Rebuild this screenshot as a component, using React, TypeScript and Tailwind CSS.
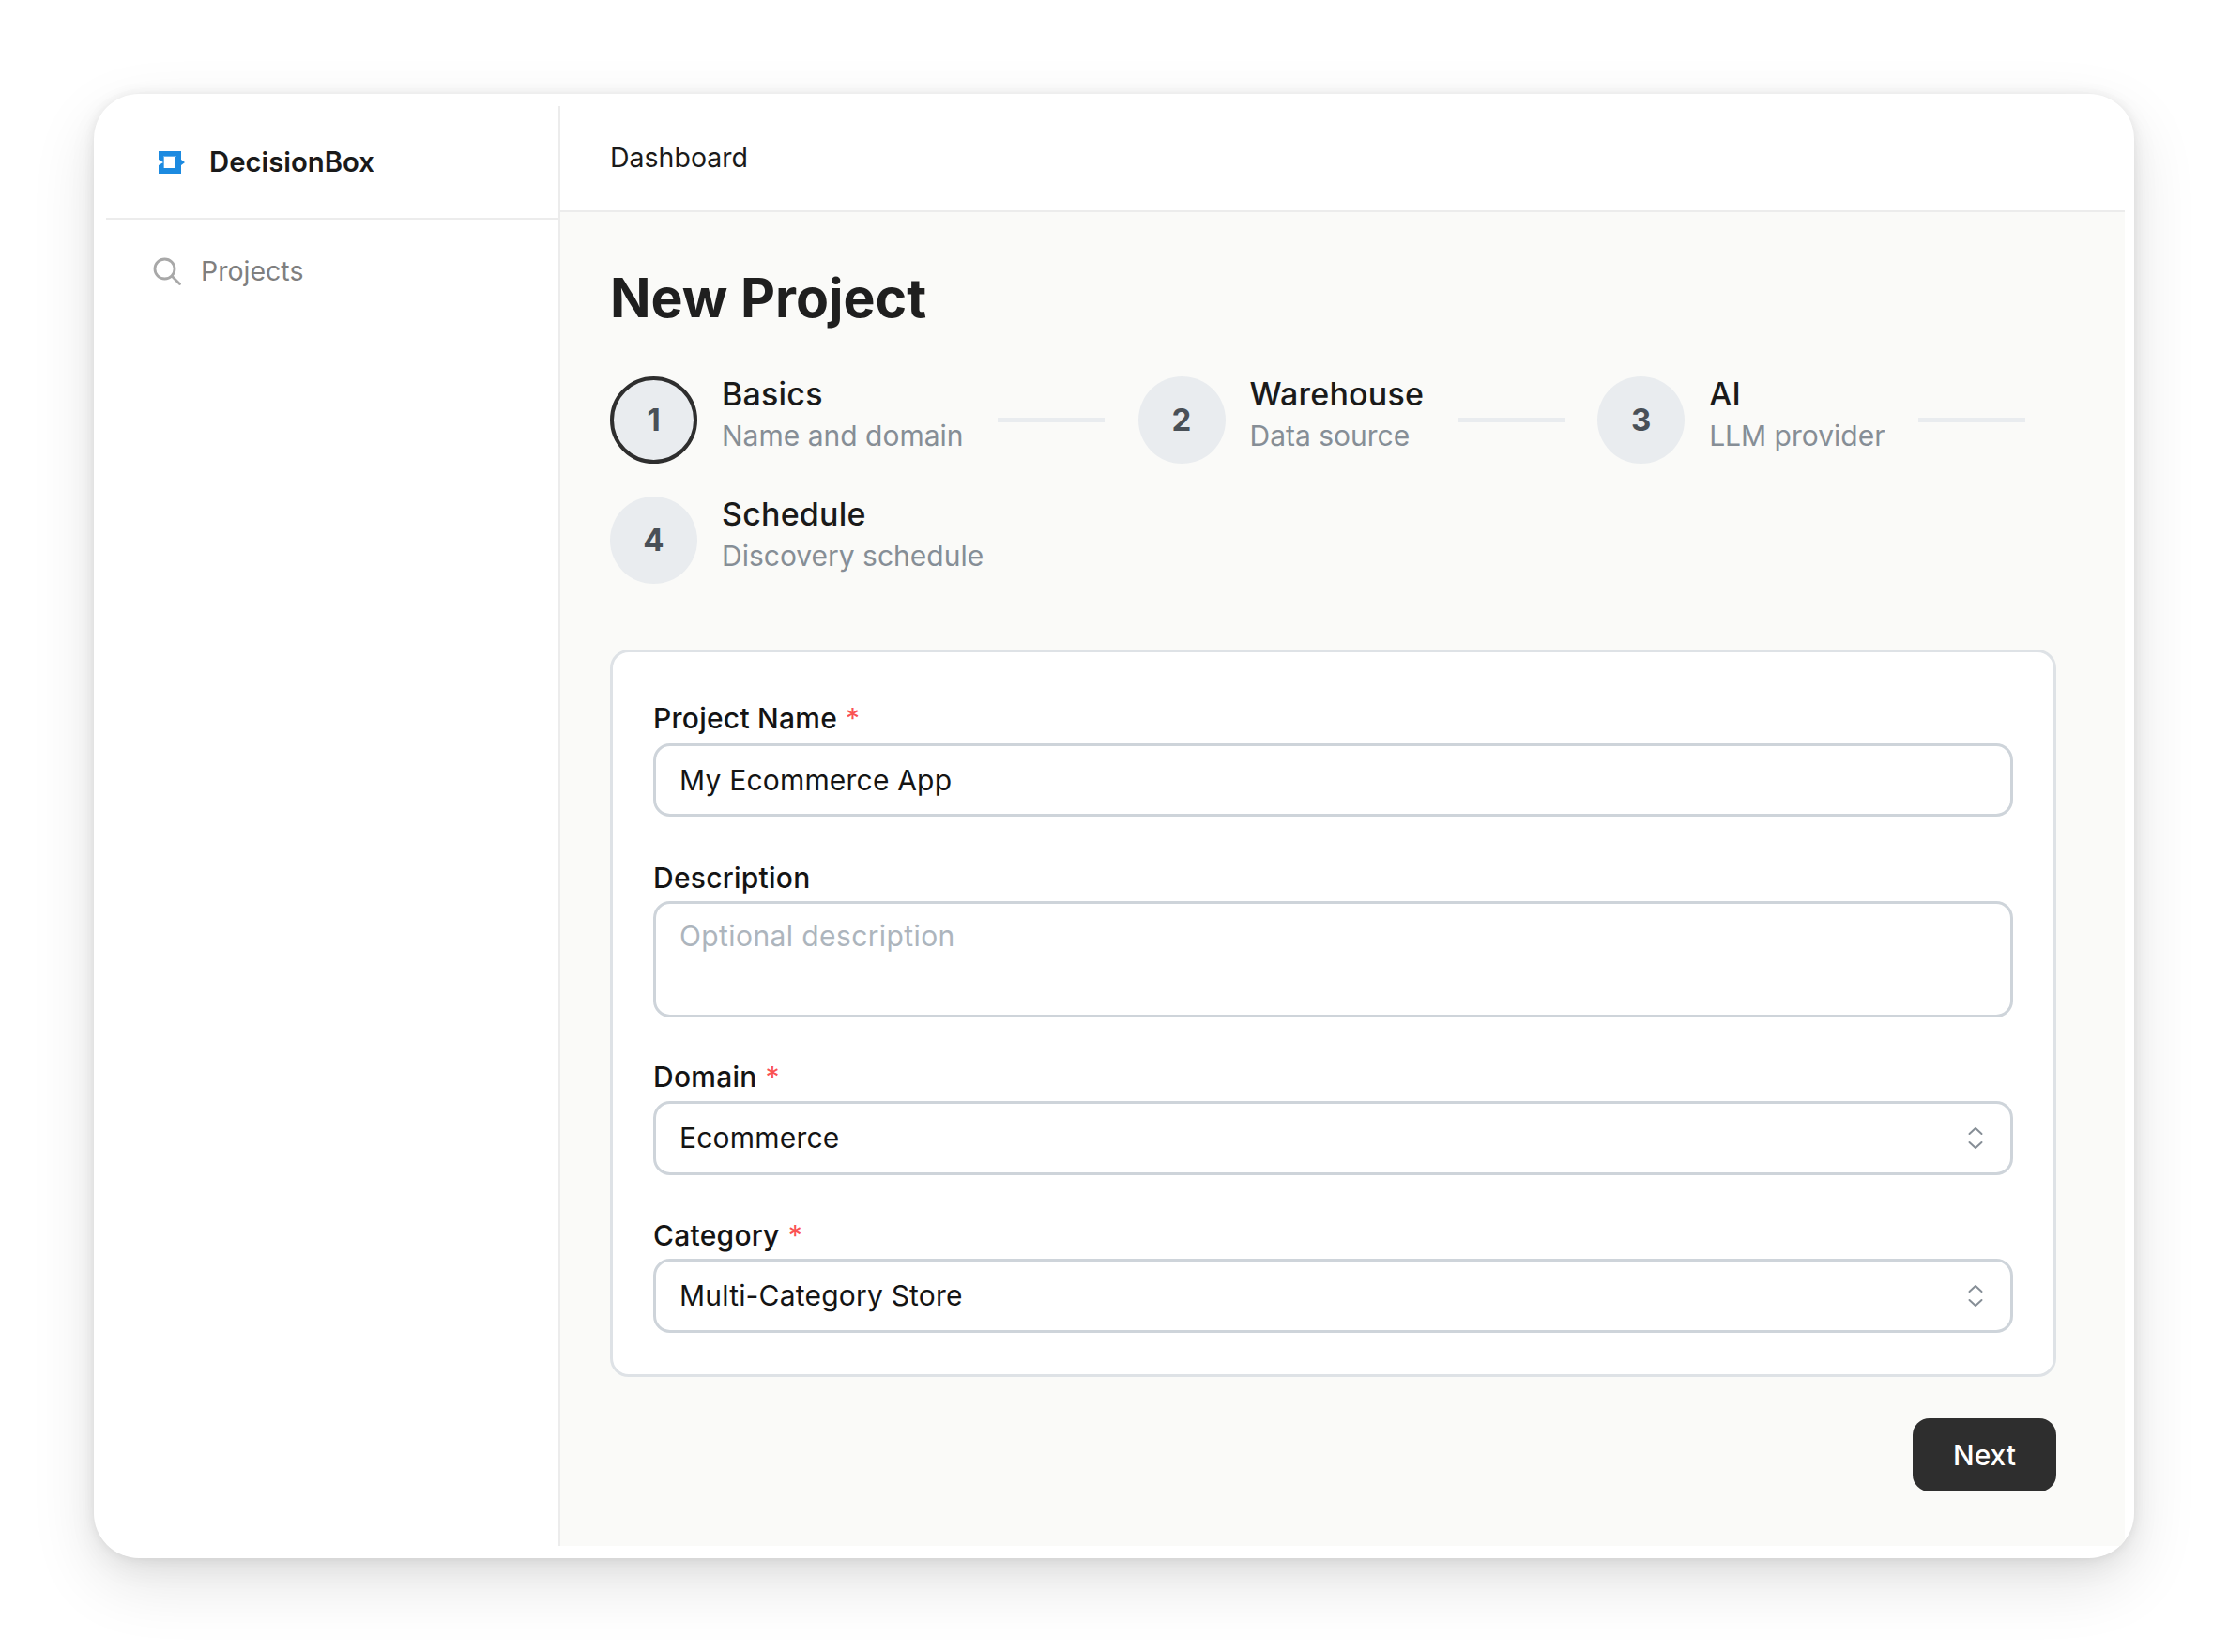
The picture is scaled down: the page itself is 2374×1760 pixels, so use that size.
import React from 'react';

const font = 'font-["Inter","Liberation_Sans",sans-serif]';

interface Step {
  n: number;
  title: string;
  desc: string;
}

const steps: Step[] = [
  { n: 1, title: 'Basics', desc: 'Name and domain' },
  { n: 2, title: 'Warehouse', desc: 'Data source' },
  { n: 3, title: 'AI', desc: 'LLM provider' },
  { n: 4, title: 'Schedule', desc: 'Discovery schedule' },
];

function Logo() {
  return (
    <svg width="28" height="24" viewBox="0 0 28 24" className="shrink-0">
      <path
        fillRule="evenodd"
        fill="#1c8ae0"
        d="M0 0H24V9L28 12L24 15V24H0V15L5 12L0 9ZM6 6V18H18V6Z"
      />
      <path fill="#a5d3f5" d="M5 5H19V6H6V18H5Z" opacity="0.55" />
    </svg>
  );
}

function SearchIcon() {
  return (
    <svg width="30" height="30" viewBox="0 0 30 30" fill="none" stroke="#a8a8a8" strokeWidth="2.8" strokeLinecap="round" className="shrink-0">
      <circle cx="12.5" cy="12.5" r="10.5" />
      <line x1="20.5" y1="20.5" x2="28.5" y2="28.5" />
    </svg>
  );
}

function Sort() {
  return (
    <svg width="16" height="25" viewBox="0 0 16 25" fill="none" stroke="#868e96" strokeWidth="2" strokeLinecap="round" strokeLinejoin="round">
      <polyline points="1.5,8 8,2 14.5,8" />
      <polyline points="1.5,17 8,23 14.5,17" />
    </svg>
  );
}

function Label({ text, required }: { text: string; required?: boolean }) {
  return (
    <div className="flex items-center h-[34px] text-[30px] leading-[34px] font-medium text-[#141414] tracking-[0.25px]">
      {text}
      {required && <span className="ml-[9px] font-normal text-[#fa5252]">*</span>}
    </div>
  );
}

function StepItem({ step, active }: { step: Step; active: boolean }) {
  return (
    <div className="flex items-center">
      <div
        className={
          active
            ? 'w-[93px] h-[93px] rounded-full bg-[#e9ecef] border-[4px] border-[#2e2e2e] flex items-center justify-center text-[33px] font-bold text-[#495057]'
            : 'w-[93px] h-[93px] rounded-full bg-[#e9ecef] flex items-center justify-center text-[33px] font-bold text-[#495057]'
        }
      >
        {step.n}
      </div>
      <div className="ml-[26px] pb-[5px]">
        <div className="text-[34px] leading-[38px] font-[450] text-[#1a1a1a] tracking-[0.2px]">{step.title}</div>
        <div className="text-[30px] leading-[50px] text-[#868e96]">{step.desc}</div>
      </div>
    </div>
  );
}

export default function App() {
  return (
    <div className={`w-[2374px] h-[1760px] bg-white p-[100px] ${font}`}>
      <div className="w-full h-full overflow-hidden rounded-[48px] bg-white pl-[13px] py-[13px] pr-[10px] shadow-[0_0_12px_rgba(0,0,0,0.07),0_10px_30px_rgba(0,0,0,0.06),0_26px_70px_rgba(0,0,0,0.11)]">
        <div className="flex h-full">
          {/* sidebar */}
          <div className="w-[484px] shrink-0 border-r-2 border-[#ececec]">
            <div className="h-[121px] border-b-2 border-[#ececec] flex items-center pl-[56px]">
              <Logo />
              <span className="ml-[26px] text-[29.3px] font-semibold text-[#1a1a1a]">DecisionBox</span>
            </div>
            <div className="flex items-center pl-[50px] pt-[34px]">
              <SearchIcon />
              <span className="ml-[21px] text-[28.5px] text-[#7f7f7f]">Projects</span>
            </div>
          </div>

          {/* main */}
          <div className="flex-1 flex flex-col">
            <div className="h-[113px] shrink-0 border-b-2 border-[#ececec] flex items-center pl-[53px] text-[28.5px] text-[#1a1a1a]">
              Dashboard
            </div>
            <div className="flex-1 bg-[#fafaf8] pl-[53px] pr-[73px] pt-[57px]">
              <h1 className="text-[57.2px] leading-[70px] font-bold text-[#1f1f1f]">New Project</h1>

              <div className="mt-[48px] flex flex-wrap items-center gap-y-[35px]">
                {steps.map((step, i) => (
                  <React.Fragment key={step.n}>
                    <StepItem step={step} active={i === 0} />
                    {i === 0 && <div className="w-[114px] h-[5px] mx-[36px] bg-[#e9ecef]" />}
                    {i === 1 && <div className="w-[114px] h-[5px] ml-[37px] mr-[34px] bg-[#e9ecef]" />}
                    {i === 2 && <div className="w-[114px] h-[5px] ml-[36px] bg-[#e9ecef]" />}
                  </React.Fragment>
                ))}
              </div>

              <div className="mt-[70px] h-[775px] rounded-[20px] border-[3px] border-[#dee2e6] bg-white px-[43px] pt-[53px]">
                <Label text="Project Name" required />
                <div className="mt-[10px] h-[78px] rounded-[18px] border-[3px] border-[#ced4da] flex items-center pl-[25px] text-[30px] tracking-[0.2px] text-[#141414]">
                  My Ecommerce App
                </div>

                <div className="mt-[48px]">
                  <Label text="Description" />
                </div>
                <div className="mt-[8px] h-[124px] rounded-[18px] border-[3px] border-[#ced4da] pl-[25px] pt-[14px] text-[30px] leading-[40px] tracking-[0.4px] text-[#adb5bd]">
                  Optional description
                </div>

                <div className="mt-[46px]">
                  <Label text="Domain" required />
                </div>
                <div className="mt-[9px] h-[79px] rounded-[18px] border-[3px] border-[#ced4da] flex items-center justify-between pl-[25px] pr-[29px] text-[30px] tracking-[0.2px] text-[#141414]">
                  Ecommerce
                  <Sort />
                </div>

                <div className="mt-[47px]">
                  <Label text="Category" required />
                </div>
                <div className="mt-[8px] h-[79px] rounded-[18px] border-[3px] border-[#ced4da] flex items-center justify-between pl-[25px] pr-[29px] text-[30px] tracking-[0.2px] text-[#141414]">
                  Multi-Category Store
                  <Sort />
                </div>
              </div>

              <div className="mt-[44px] flex justify-end">
                <button className="w-[153px] h-[78px] rounded-[18px] bg-[#2e2e2e] text-white text-[30px] font-medium">
                  Next
                </button>
              </div>
            </div>
          </div>
        </div>
      </div>
    </div>
  );
}
